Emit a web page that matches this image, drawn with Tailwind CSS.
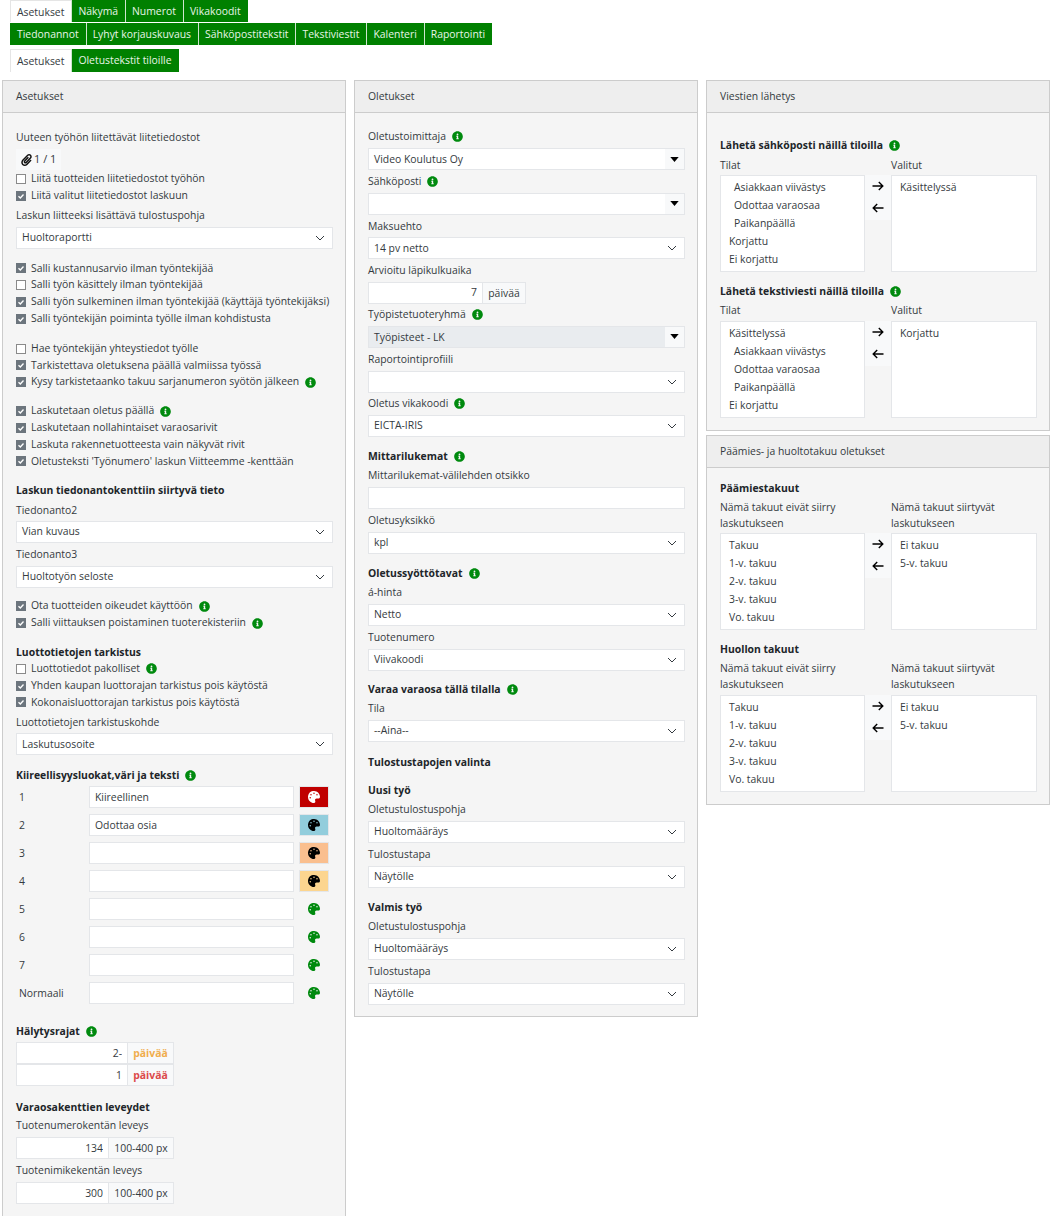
<!DOCTYPE html>
<html lang="fi">
<head>
    <meta charset="UTF-8">
    <title>Asetukset</title>
    <script src="https://cdn.jsdelivr.net/npm/@tailwindcss/browser@4"></script>
</head>
<body class="h-[1216px] overflow-hidden bg-white text-[#343a40] text-[10.4px] font-['Open_Sans',sans-serif]">
    <svg class="hidden">
        <symbol id="info" viewBox="0 0 512 512"><path fill="#008a0e" d="M256 8C119.043 8 8 119.083 8 256c0 136.997 111.043 248 248 248s248-111.003 248-248C504 119.083 392.957 8 256 8zm0 110c23.196 0 42 18.804 42 42s-18.804 42-42 42-42-18.804-42-42 18.804-42 42-42zm56 254c0 6.627-5.373 12-12 12h-88c-6.627 0-12-5.373-12-12v-24c0-6.627 5.373-12 12-12h12v-64h-12c-6.627 0-12-5.373-12-12v-24c0-6.627 5.373-12 12-12h64c6.627 0 12 5.373 12 12v100h12c6.627 0 12 5.373 12 12v24z"/></symbol>
        <symbol id="palette" viewBox="0 0 512 512"><path fill="currentColor" d="M204.3 5C104.9 24.4 24.8 104.3 5.2 203.4c-37 187 131.7 326.4 258.8 306.7 41.2-6.4 61.4-54.6 42.5-91.7-23.1-45.4 9.9-98.4 60.9-98.4h79.7c35.8 0 64.8-29.6 64.9-65.3C511.5 97.1 368.1-26.9 204.3 5zM96 320c-17.7 0-32-14.3-32-32s14.3-32 32-32 32 14.3 32 32-14.3 32-32 32zm32-128c-17.7 0-32-14.3-32-32s14.3-32 32-32 32 14.3 32 32-14.3 32-32 32zm128-64c-17.7 0-32-14.3-32-32s14.3-32 32-32 32 14.3 32 32-14.3 32-32 32zm128 64c-17.7 0-32-14.3-32-32s14.3-32 32-32 32 14.3 32 32-14.3 32-32 32z"/></symbol>
        <symbol id="chev" viewBox="0 0 10 6"><path d="M1 1l4 4 4-4" fill="none" stroke="#343a40" stroke-width="1"/></symbol>
        <symbol id="caret" viewBox="0 0 10 6"><path d="M0 0h10L5 6z" fill="#000"/></symbol>
        <symbol id="check" viewBox="0 0 12 12"><path d="M3 6.2l2.2 2.2L9 4.2" fill="none" stroke="#fff" stroke-width="1.6"/></symbol>
        <symbol id="right" viewBox="0 0 12 10"><path d="M0.5 5h10M6.8 1l4 4-4 4" fill="none" stroke="#000" stroke-width="1.4"/></symbol>
        <symbol id="left" viewBox="0 0 12 10"><path d="M11.5 5h-10M5.2 1l-4 4 4 4" fill="none" stroke="#000" stroke-width="1.4"/></symbol>
    </svg>

    <!-- Tabs -->
    <nav class="pl-[10px] h-[80px]">
        <div class="flex h-[23px]">
            <a class="h-[22px] pl-[6px] pr-[7px] leading-[22px] bg-white border-l border-t border-[#e5e5e5]">Asetukset</a>
            <a class="h-[22px] pl-[6px] pr-[7px] leading-[22px] bg-[#008000] text-[#e8f5e8] border-l border-[#cfe5cf]">Näkymä</a>
            <a class="h-[22px] pl-[6px] pr-[7px] leading-[22px] bg-[#008000] text-[#e8f5e8] border-l border-[#cfe5cf]">Numerot</a>
            <a class="h-[22px] pl-[6px] pr-[7px] leading-[22px] bg-[#008000] text-[#e8f5e8] border-l border-[#cfe5cf]">Vikakoodit</a>
        </div>
        <div class="flex h-[26px]">
            <a class="h-[22px] px-[7px] leading-[22px] bg-[#008000] text-[#e8f5e8]">Tiedonannot</a>
            <a class="h-[22px] pl-[6px] pr-[7px] leading-[22px] bg-[#008000] text-[#e8f5e8] border-l border-[#cfe5cf]">Lyhyt korjauskuvaus</a>
            <a class="h-[22px] pl-[6px] pr-[7px] leading-[22px] bg-[#008000] text-[#e8f5e8] border-l border-[#cfe5cf]">Sähköpostitekstit</a>
            <a class="h-[22px] pl-[6px] pr-[7px] leading-[22px] bg-[#008000] text-[#e8f5e8] border-l border-[#cfe5cf]">Tekstiviestit</a>
            <a class="h-[22px] pl-[6px] pr-[7px] leading-[22px] bg-[#008000] text-[#e8f5e8] border-l border-[#cfe5cf]">Kalenteri</a>
            <a class="h-[22px] pl-[6px] pr-[7px] leading-[22px] bg-[#008000] text-[#e8f5e8] border-l border-[#cfe5cf]">Raportointi</a>
        </div>
        <div class="flex">
            <a class="h-[23px] pl-[6px] pr-[7px] leading-[22px] bg-white border-l border-t border-[#e5e5e5]">Asetukset</a>
            <a class="h-[23px] pl-[6px] pr-[7px] leading-[23px] bg-[#008000] text-[#e8f5e8] border-l border-[#cfe5cf]">Oletustekstit tiloille</a>
        </div>
    </nav>

    <div class="grid grid-cols-[344px_344px_344px] gap-[8px] pl-[2px] items-start">

        <!-- Asetukset -->
        <section class="border border-[#ccc] bg-[#f5f5f5] h-[1200px]">
            <h2 class="h-[32px] px-[13px] leading-[30px] bg-[#eee] border-b border-[#ccc]">Asetukset</h2>
            <div class="pl-[13px] pr-[12px] pt-[13px]">
                <p class="h-[23px] leading-[22px]">Uuteen työhön liitettävät liitetiedostot</p>
                <div class="flex items-center gap-[2px] w-[45px] h-[21px] pl-[5px] bg-[#f8f9fa]">
                    <svg class="w-[11px] h-[12px]" viewBox="0 0 448 512"><path fill="#111" d="M43.246 466.142c-58.43-60.289-57.341-157.511 1.386-217.581L254.392 34c44.316-45.332 116.351-45.336 160.671 0 43.89 44.894 43.943 117.329 0 162.276L232.214 383.128c-29.855 30.537-78.633 30.111-107.982-.998-28.275-29.97-27.368-77.473 1.452-106.953l143.743-146.835c6.182-6.314 16.312-6.422 22.626-.241l22.861 22.379c6.315 6.182 6.422 16.312.241 22.626L171.427 319.927c-4.932 5.045-5.236 13.428-.648 18.292 4.372 4.634 11.245 4.711 15.688.165l182.849-186.851c19.613-20.062 19.613-52.725-.011-72.798-19.189-19.627-49.957-19.637-69.154 0L90.39 293.295c-34.763 35.56-35.299 93.12-1.191 128.313 34.01 35.093 88.985 35.137 123.058.286l172.06-175.999c6.177-6.319 16.307-6.433 22.626-.256l22.877 22.364c6.319 6.177 6.434 16.307.256 22.626l-172.06 175.998c-59.576 60.938-155.943 60.216-214.77-.485z"/></svg>
                    <span class="text-[11px]">1 / 1</span>
                </div>
                <label class="flex items-center gap-[5px] h-[17px]"><span class="w-[10px] h-[10px] border border-[#8a8a8a] bg-white"></span>Liitä tuotteiden liitetiedostot työhön</label>
                <label class="flex items-center gap-[5px] h-[17px]"><span class="w-[10px] h-[10px] bg-[#6c757d]"><svg class="w-[10px] h-[10px]"><use href="#check"/></svg></span>Liitä valitut liitetiedostot laskuun</label>
                <p class="h-[22.5px] leading-[22.5px]">Laskun liitteeksi lisättävä tulostuspohja</p>
                <div class="flex items-center justify-between h-[22px] px-[5px] pr-[7px] bg-white border border-[#e4e6e9]"><span>Huoltoraportti</span><svg class="w-[10px] h-[6px]"><use href="#chev"/></svg></div>

                <div class="mt-[11.6px]">
                    <label class="flex items-center gap-[5px] h-[16.8px]"><span class="w-[10px] h-[10px] bg-[#6c757d]"><svg class="w-[10px] h-[10px]"><use href="#check"/></svg></span>Salli kustannusarvio ilman työntekijää</label>
                    <label class="flex items-center gap-[5px] h-[16.8px]"><span class="w-[10px] h-[10px] border border-[#8a8a8a] bg-white"></span>Salli työn käsittely ilman työntekijää</label>
                    <label class="flex items-center gap-[5px] h-[16.8px]"><span class="w-[10px] h-[10px] bg-[#6c757d]"><svg class="w-[10px] h-[10px]"><use href="#check"/></svg></span>Salli työn sulkeminen ilman työntekijää (käyttäjä työntekijäksi)</label>
                    <label class="flex items-center gap-[5px] h-[16.8px]"><span class="w-[10px] h-[10px] bg-[#6c757d]"><svg class="w-[10px] h-[10px]"><use href="#check"/></svg></span>Salli työntekijän poiminta työlle ilman kohdistusta</label>
                </div>
                <div class="mt-[13px]">
                    <label class="flex items-center gap-[5px] h-[16.8px]"><span class="w-[10px] h-[10px] border border-[#8a8a8a] bg-white"></span>Hae työntekijän yhteystiedot työlle</label>
                    <label class="flex items-center gap-[5px] h-[16.8px]"><span class="w-[10px] h-[10px] bg-[#6c757d]"><svg class="w-[10px] h-[10px]"><use href="#check"/></svg></span>Tarkistettava oletuksena päällä valmiissa työssä</label>
                    <label class="flex items-center gap-[5px] h-[16.8px]"><span class="w-[10px] h-[10px] bg-[#6c757d]"><svg class="w-[10px] h-[10px]"><use href="#check"/></svg></span>Kysy tarkistetaanko takuu sarjanumeron syötön jälkeen<svg class="w-[11px] h-[11px] ml-[1px]"><use href="#info"/></svg></label>
                </div>
                <div class="mt-[12px]">
                    <label class="flex items-center gap-[5px] h-[16.8px]"><span class="w-[10px] h-[10px] bg-[#6c757d]"><svg class="w-[10px] h-[10px]"><use href="#check"/></svg></span>Laskutetaan oletus päällä<svg class="w-[11px] h-[11px] ml-[1px]"><use href="#info"/></svg></label>
                    <label class="flex items-center gap-[5px] h-[16.8px]"><span class="w-[10px] h-[10px] bg-[#6c757d]"><svg class="w-[10px] h-[10px]"><use href="#check"/></svg></span>Laskutetaan nollahintaiset varaosarivit</label>
                    <label class="flex items-center gap-[5px] h-[16.8px]"><span class="w-[10px] h-[10px] bg-[#6c757d]"><svg class="w-[10px] h-[10px]"><use href="#check"/></svg></span>Laskuta rakennetuotteesta vain näkyvät rivit</label>
                    <label class="flex items-center gap-[5px] h-[16.8px]"><span class="w-[10px] h-[10px] bg-[#6c757d]"><svg class="w-[10px] h-[10px]"><use href="#check"/></svg></span>Oletusteksti 'Työnumero' laskun Viitteemme -kenttään</label>
                </div>

                <h3 class="mt-[11px] h-[18px] leading-[18px] font-bold text-[#212529]">Laskun tiedonantokenttiin siirtyvä tieto</h3>
                <p class="h-[22px] leading-[22.5px]">Tiedonanto2</p>
                <div class="flex items-center justify-between h-[22px] px-[5px] pr-[7px] bg-white border border-[#e4e6e9]"><span>Vian kuvaus</span><svg class="w-[10px] h-[6px]"><use href="#chev"/></svg></div>
                <p class="h-[23px] leading-[22.5px]">Tiedonanto3</p>
                <div class="flex items-center justify-between h-[22px] px-[5px] pr-[7px] bg-white border border-[#e4e6e9]"><span>Huoltotyön seloste</span><svg class="w-[10px] h-[6px]"><use href="#chev"/></svg></div>

                <div class="mt-[10px]">
                    <label class="flex items-center gap-[5px] h-[16.8px]"><span class="w-[10px] h-[10px] bg-[#6c757d]"><svg class="w-[10px] h-[10px]"><use href="#check"/></svg></span>Ota tuotteiden oikeudet käyttöön<svg class="w-[11px] h-[11px] ml-[1px]"><use href="#info"/></svg></label>
                    <label class="flex items-center gap-[5px] h-[16.8px]"><span class="w-[10px] h-[10px] bg-[#6c757d]"><svg class="w-[10px] h-[10px]"><use href="#check"/></svg></span>Salli viittauksen poistaminen tuoterekisteriin<svg class="w-[11px] h-[11px] ml-[1px]"><use href="#info"/></svg></label>
                </div>

                <h3 class="mt-[12px] h-[17px] leading-[18px] font-bold text-[#212529]">Luottotietojen tarkistus</h3>
                <label class="flex items-center gap-[5px] h-[16.8px]"><span class="w-[10px] h-[10px] border border-[#8a8a8a] bg-white"></span>Luottotiedot pakolliset<svg class="w-[11px] h-[11px] ml-[1px]"><use href="#info"/></svg></label>
                <label class="flex items-center gap-[5px] h-[16.8px]"><span class="w-[10px] h-[10px] bg-[#6c757d]"><svg class="w-[10px] h-[10px]"><use href="#check"/></svg></span>Yhden kaupan luottorajan tarkistus pois käytöstä</label>
                <label class="flex items-center gap-[5px] h-[16.8px]"><span class="w-[10px] h-[10px] bg-[#6c757d]"><svg class="w-[10px] h-[10px]"><use href="#check"/></svg></span>Kokonaisluottorajan tarkistus pois käytöstä</label>
                <p class="h-[22.5px] leading-[22.5px]">Luottotietojen tarkistuskohde</p>
                <div class="flex items-center justify-between h-[22px] px-[5px] pr-[7px] bg-white border border-[#e4e6e9]"><span>Laskutusosoite</span><svg class="w-[10px] h-[6px]"><use href="#chev"/></svg></div>

                <h3 class="mt-[10px] flex items-center gap-[6px] h-[21px] font-bold text-[#212529]">Kiireellisyysluokat,väri ja teksti<svg class="w-[11px] h-[11px]"><use href="#info"/></svg></h3>
                <div class="grid grid-cols-[73px_205px_1fr] gap-y-[6px] items-center">
                    <span class="pl-[3px]">1</span><input class="h-[22px] px-[5px] bg-white border border-[#e4e6e9]" value="Kiireellinen"><span class="ml-[5px] w-[30px] h-[22px] flex items-center justify-center bg-[#c00000] border border-[#e4e6e9] text-white"><svg class="w-[12px] h-[12px]"><use href="#palette"/></svg></span>
                    <span class="pl-[3px]">2</span><input class="h-[22px] px-[5px] bg-white border border-[#e4e6e9]" value="Odottaa osia"><span class="ml-[5px] w-[30px] h-[22px] flex items-center justify-center bg-[#92cddc] border border-[#e4e6e9] text-black"><svg class="w-[12px] h-[12px]"><use href="#palette"/></svg></span>
                    <span class="pl-[3px]">3</span><input class="h-[22px] px-[5px] bg-white border border-[#e4e6e9]"><span class="ml-[5px] w-[30px] h-[22px] flex items-center justify-center bg-[#fabf8f] border border-[#e4e6e9] text-black"><svg class="w-[12px] h-[12px]"><use href="#palette"/></svg></span>
                    <span class="pl-[3px]">4</span><input class="h-[22px] px-[5px] bg-white border border-[#e4e6e9]"><span class="ml-[5px] w-[30px] h-[22px] flex items-center justify-center bg-[#fcd58f] border border-[#e4e6e9] text-black"><svg class="w-[12px] h-[12px]"><use href="#palette"/></svg></span>
                    <span class="pl-[3px]">5</span><input class="h-[22px] px-[5px] bg-white border border-[#e4e6e9]"><span class="ml-[5px] w-[30px] h-[22px] flex items-center justify-center text-[#008a0e]"><svg class="w-[12px] h-[12px]"><use href="#palette"/></svg></span>
                    <span class="pl-[3px]">6</span><input class="h-[22px] px-[5px] bg-white border border-[#e4e6e9]"><span class="ml-[5px] w-[30px] h-[22px] flex items-center justify-center text-[#008a0e]"><svg class="w-[12px] h-[12px]"><use href="#palette"/></svg></span>
                    <span class="pl-[3px]">7</span><input class="h-[22px] px-[5px] bg-white border border-[#e4e6e9]"><span class="ml-[5px] w-[30px] h-[22px] flex items-center justify-center text-[#008a0e]"><svg class="w-[12px] h-[12px]"><use href="#palette"/></svg></span>
                    <span class="pl-[3px]">Normaali</span><input class="h-[22px] px-[5px] bg-white border border-[#e4e6e9]"><span class="ml-[5px] w-[30px] h-[22px] flex items-center justify-center text-[#008a0e]"><svg class="w-[12px] h-[12px]"><use href="#palette"/></svg></span>
                </div>

                <h3 class="mt-[16px] flex items-center gap-[6px] h-[22px] font-bold text-[#212529]">Hälytysrajat<svg class="w-[11px] h-[11px]"><use href="#info"/></svg></h3>
                <div class="flex w-[158px] h-[22px]"><input class="w-[112px] px-[5px] text-right bg-white border border-[#e4e6e9]" value="2-"><span class="flex-1 text-center leading-[20px] font-bold text-[#f0ad4e] bg-[#f8f9fa] border-y border-r border-[#e4e6e9]">päivää</span></div>
                <div class="flex w-[158px] h-[22px]"><input class="w-[112px] px-[5px] text-right bg-white border border-[#e4e6e9]" value="1"><span class="flex-1 text-center leading-[20px] font-bold text-[#dc4a4a] bg-[#f8f9fa] border-y border-r border-[#e4e6e9]">päivää</span></div>

                <h3 class="mt-[10px] h-[18px] leading-[22px] font-bold text-[#212529]">Varaosakenttien leveydet</h3>
                <p class="h-[23px] leading-[22.5px]">Tuotenumerokentän leveys</p>
                <div class="flex w-[158px] h-[22px]"><input class="w-[93px] px-[5px] text-right bg-white border border-[#e4e6e9]" value="134"><span class="flex-1 text-center leading-[20px] bg-[#f8f9fa] border-y border-r border-[#e4e6e9]">100-400 px</span></div>
                <p class="h-[23px] leading-[22.5px]">Tuotenimikekentän leveys</p>
                <div class="flex w-[158px] h-[22px]"><input class="w-[93px] px-[5px] text-right bg-white border border-[#e4e6e9]" value="300"><span class="flex-1 text-center leading-[20px] bg-[#f8f9fa] border-y border-r border-[#e4e6e9]">100-400 px</span></div>
            </div>
        </section>

        <!-- Oletukset -->
        <section class="border border-[#ccc] bg-[#f5f5f5] h-[937px]">
            <h2 class="h-[32px] px-[13px] leading-[30px] bg-[#eee] border-b border-[#ccc]">Oletukset</h2>
            <div class="pl-[13px] pr-[12px] pt-[12px]">
                <p class="flex items-center gap-[6px] h-[23px]">Oletustoimittaja<svg class="w-[11px] h-[11px]"><use href="#info"/></svg></p>
                <div class="flex h-[22px] bg-white border border-[#e4e6e9]"><span class="flex-1 leading-[20px] px-[5px]">Video Koulutus Oy</span><span class="w-[19px] flex items-center justify-center bg-[#f8f9fa]"><svg class="w-[9px] h-[5px]"><use href="#caret"/></svg></span></div>
                <p class="flex items-center gap-[6px] h-[22.67px]">Sähköposti<svg class="w-[11px] h-[11px]"><use href="#info"/></svg></p>
                <div class="flex h-[22px] bg-white border border-[#e4e6e9]"><span class="flex-1 leading-[20px] px-[5px]"></span><span class="w-[19px] flex items-center justify-center bg-[#f8f9fa]"><svg class="w-[9px] h-[5px]"><use href="#caret"/></svg></span></div>
                <p class="h-[22.67px] leading-[22.5px]">Maksuehto</p>
                <div class="flex items-center justify-between h-[22px] px-[5px] pr-[7px] bg-white border border-[#e4e6e9]"><span>14 pv netto</span><svg class="w-[10px] h-[6px]"><use href="#chev"/></svg></div>
                <p class="h-[22.67px] leading-[22.5px]">Arvioitu läpikulkuaika</p>
                <div class="flex w-[158px] h-[22px]"><input class="w-[115px] px-[5px] text-right bg-white border border-[#e4e6e9]" value="7"><span class="flex-1 text-center leading-[20px] bg-[#f8f9fa] border-y border-r border-[#e4e6e9]">päivää</span></div>
                <p class="flex items-center gap-[6px] h-[22px]">Työpistetuoteryhmä<svg class="w-[11px] h-[11px]"><use href="#info"/></svg></p>
                <div class="flex h-[22px] bg-[#e9ecef] border border-[#e4e6e9]"><span class="flex-1 leading-[20px] px-[5px]">Työpisteet - LK</span><span class="w-[19px] flex items-center justify-center bg-[#f8f9fa]"><svg class="w-[9px] h-[5px]"><use href="#caret"/></svg></span></div>
                <p class="h-[22.67px] leading-[22.5px]">Raportointiprofiili</p>
                <div class="flex items-center justify-end h-[22px] px-[5px] pr-[7px] bg-white border border-[#e4e6e9]"><svg class="w-[10px] h-[6px]"><use href="#chev"/></svg></div>
                <p class="flex items-center gap-[6px] h-[22.67px]">Oletus vikakoodi<svg class="w-[11px] h-[11px]"><use href="#info"/></svg></p>
                <div class="flex items-center justify-between h-[22px] px-[5px] pr-[7px] bg-white border border-[#e4e6e9]"><span>EICTA-IRIS</span><svg class="w-[10px] h-[6px]"><use href="#chev"/></svg></div>

                <h3 class="mt-[12px] flex items-center gap-[6px] h-[15px] font-bold text-[#212529]">Mittarilukemat<svg class="w-[11px] h-[11px]"><use href="#info"/></svg></h3>
                <p class="h-[23px] leading-[22.5px]">Mittarilukemat-välilehden otsikko</p>
                <input class="block w-full h-[22px] bg-white border border-[#e4e6e9]">
                <p class="h-[23px] leading-[22.5px]">Oletusyksikkö</p>
                <div class="flex items-center justify-between h-[22px] px-[5px] pr-[7px] bg-white border border-[#e4e6e9]"><span>kpl</span><svg class="w-[10px] h-[6px]"><use href="#chev"/></svg></div>

                <h3 class="mt-[12px] flex items-center gap-[6px] h-[15px] font-bold text-[#212529]">Oletussyöttötavat<svg class="w-[11px] h-[11px]"><use href="#info"/></svg></h3>
                <p class="h-[23px] leading-[22.5px]">á-hinta</p>
                <div class="flex items-center justify-between h-[22px] px-[5px] pr-[7px] bg-white border border-[#e4e6e9]"><span>Netto</span><svg class="w-[10px] h-[6px]"><use href="#chev"/></svg></div>
                <p class="h-[23px] leading-[22.5px]">Tuotenumero</p>
                <div class="flex items-center justify-between h-[22px] px-[5px] pr-[7px] bg-white border border-[#e4e6e9]"><span>Viivakoodi</span><svg class="w-[10px] h-[6px]"><use href="#chev"/></svg></div>

                <h3 class="mt-[11px] flex items-center gap-[6px] h-[15px] font-bold text-[#212529]">Varaa varaosa tällä tilalla<svg class="w-[11px] h-[11px]"><use href="#info"/></svg></h3>
                <p class="h-[23px] leading-[22.5px]">Tila</p>
                <div class="flex items-center justify-between h-[22px] px-[5px] pr-[7px] bg-white border border-[#e4e6e9]"><span>--Aina--</span><svg class="w-[10px] h-[6px]"><use href="#chev"/></svg></div>

                <h3 class="mt-[12.5px] h-[15px] leading-[15px] font-bold text-[#212529]">Tulostustapojen valinta</h3>
                <h3 class="mt-[13px] h-[15px] leading-[15px] font-bold text-[#212529]">Uusi työ</h3>
                <p class="h-[23px] leading-[22.5px]">Oletustulostuspohja</p>
                <div class="flex items-center justify-between h-[22px] px-[5px] pr-[7px] bg-white border border-[#e4e6e9]"><span>Huoltomääräys</span><svg class="w-[10px] h-[6px]"><use href="#chev"/></svg></div>
                <p class="h-[23px] leading-[22.5px]">Tulostustapa</p>
                <div class="flex items-center justify-between h-[22px] px-[5px] pr-[7px] bg-white border border-[#e4e6e9]"><span>Näytölle</span><svg class="w-[10px] h-[6px]"><use href="#chev"/></svg></div>

                <h3 class="mt-[12px] h-[15px] leading-[15px] font-bold text-[#212529]">Valmis työ</h3>
                <p class="h-[23px] leading-[22.5px]">Oletustulostuspohja</p>
                <div class="flex items-center justify-between h-[22px] px-[5px] pr-[7px] bg-white border border-[#e4e6e9]"><span>Huoltomääräys</span><svg class="w-[10px] h-[6px]"><use href="#chev"/></svg></div>
                <p class="h-[23px] leading-[22.5px]">Tulostustapa</p>
                <div class="flex items-center justify-between h-[22px] px-[5px] pr-[7px] bg-white border border-[#e4e6e9]"><span>Näytölle</span><svg class="w-[10px] h-[6px]"><use href="#chev"/></svg></div>
            </div>
        </section>

        <div class="flex flex-col gap-[4px]">
            <!-- Viestien lähetys -->
            <section class="border border-[#ccc] bg-[#f5f5f5] h-[351px]">
                <h2 class="h-[32px] px-[13px] leading-[30px] bg-[#eee] border-b border-[#ccc]">Viestien lähetys</h2>
                <div class="px-[13px] pt-[23px]">
                    <h3 class="flex items-center gap-[6px] h-[19px] font-bold text-[#212529]">Lähetä sähköposti näillä tiloilla<svg class="w-[11px] h-[11px]"><use href="#info"/></svg></h3>
                    <div class="grid grid-cols-[145px_26px_146px] h-[20px] leading-[20px]"><span>Tilat</span><span></span><span>Valitut</span></div>
                    <div class="grid grid-cols-[145px_26px_146px]">
                        <ul class="h-[97px] pt-[2px] bg-white border border-[#e4e6e9] leading-[18px]">
                            <li class="pl-[13px]">Asiakkaan viivästys</li>
                            <li class="pl-[13px]">Odottaa varaosaa</li>
                            <li class="pl-[13px]">Paikanpäällä</li>
                            <li class="pl-[8px]">Korjattu</li>
                            <li class="pl-[8px]">Ei korjattu</li>
                        </ul>
                        <div class="flex flex-col items-center gap-[12px] h-[45px] pt-[6px] bg-[#f8f9fa]">
                            <svg class="w-[12px] h-[10px]"><use href="#right"/></svg>
                            <svg class="w-[12px] h-[10px]"><use href="#left"/></svg>
                        </div>
                        <ul class="h-[97px] pt-[2px] bg-white border border-[#e4e6e9] leading-[18px]">
                            <li class="pl-[8px]">Käsittelyssä</li>
                        </ul>
                    </div>
                    <h3 class="mt-[10px] flex items-center gap-[6px] h-[19px] font-bold text-[#212529]">Lähetä tekstiviesti näillä tiloilla<svg class="w-[11px] h-[11px]"><use href="#info"/></svg></h3>
                    <div class="grid grid-cols-[145px_26px_146px] h-[20px] leading-[19px]"><span>Tilat</span><span></span><span>Valitut</span></div>
                    <div class="grid grid-cols-[145px_26px_146px]">
                        <ul class="h-[97px] pt-[2px] bg-white border border-[#e4e6e9] leading-[18px]">
                            <li class="pl-[8px]">Käsittelyssä</li>
                            <li class="pl-[13px]">Asiakkaan viivästys</li>
                            <li class="pl-[13px]">Odottaa varaosaa</li>
                            <li class="pl-[13px]">Paikanpäällä</li>
                            <li class="pl-[8px]">Ei korjattu</li>
                        </ul>
                        <div class="flex flex-col items-center gap-[12px] h-[45px] pt-[6px] bg-[#f8f9fa]">
                            <svg class="w-[12px] h-[10px]"><use href="#right"/></svg>
                            <svg class="w-[12px] h-[10px]"><use href="#left"/></svg>
                        </div>
                        <ul class="h-[97px] pt-[2px] bg-white border border-[#e4e6e9] leading-[18px]">
                            <li class="pl-[8px]">Korjattu</li>
                        </ul>
                    </div>
                </div>
            </section>

            <!-- Päämies- ja huoltotakuu oletukset -->
            <section class="border border-[#ccc] bg-[#f5f5f5] h-[370px]">
                <h2 class="h-[32px] px-[13px] leading-[30px] bg-[#eee] border-b border-[#ccc]">Päämies- ja huoltotakuu oletukset</h2>
                <div class="px-[13px] pt-[11px]">
                    <h3 class="h-[18px] leading-[18px] font-bold text-[#212529]">Päämiestakuut</h3>
                    <div class="grid grid-cols-[145px_26px_146px] h-[36px] leading-[16px] pt-[2px]"><span>Nämä takuut eivät siirry laskutukseen</span><span></span><span>Nämä takuut siirtyvät laskutukseen</span></div>
                    <div class="grid grid-cols-[145px_26px_146px]">
                        <ul class="h-[97px] pt-[2px] bg-white border border-[#e4e6e9] leading-[18px]">
                            <li class="pl-[8px]">Takuu</li>
                            <li class="pl-[8px]">1-v. takuu</li>
                            <li class="pl-[8px]">2-v. takuu</li>
                            <li class="pl-[8px]">3-v. takuu</li>
                            <li class="pl-[8px]">Vo. takuu</li>
                        </ul>
                        <div class="flex flex-col items-center gap-[12px] h-[45px] pt-[6px] bg-[#f8f9fa]">
                            <svg class="w-[12px] h-[10px]"><use href="#right"/></svg>
                            <svg class="w-[12px] h-[10px]"><use href="#left"/></svg>
                        </div>
                        <ul class="h-[97px] pt-[2px] bg-white border border-[#e4e6e9] leading-[18px]">
                            <li class="pl-[8px]">Ei takuu</li>
                            <li class="pl-[8px]">5-v. takuu</li>
                        </ul>
                    </div>
                    <h3 class="mt-[10px] h-[18px] leading-[18px] font-bold text-[#212529]">Huollon takuut</h3>
                    <div class="grid grid-cols-[145px_26px_146px] h-[37px] leading-[16px] pt-[2px]"><span>Nämä takuut eivät siirry laskutukseen</span><span></span><span>Nämä takuut siirtyvät laskutukseen</span></div>
                    <div class="grid grid-cols-[145px_26px_146px]">
                        <ul class="h-[97px] pt-[2px] bg-white border border-[#e4e6e9] leading-[18px]">
                            <li class="pl-[8px]">Takuu</li>
                            <li class="pl-[8px]">1-v. takuu</li>
                            <li class="pl-[8px]">2-v. takuu</li>
                            <li class="pl-[8px]">3-v. takuu</li>
                            <li class="pl-[8px]">Vo. takuu</li>
                        </ul>
                        <div class="flex flex-col items-center gap-[12px] h-[45px] pt-[6px] bg-[#f8f9fa]">
                            <svg class="w-[12px] h-[10px]"><use href="#right"/></svg>
                            <svg class="w-[12px] h-[10px]"><use href="#left"/></svg>
                        </div>
                        <ul class="h-[97px] pt-[2px] bg-white border border-[#e4e6e9] leading-[18px]">
                            <li class="pl-[8px]">Ei takuu</li>
                            <li class="pl-[8px]">5-v. takuu</li>
                        </ul>
                    </div>
                </div>
            </section>
        </div>
    </div>
</body>
</html>
